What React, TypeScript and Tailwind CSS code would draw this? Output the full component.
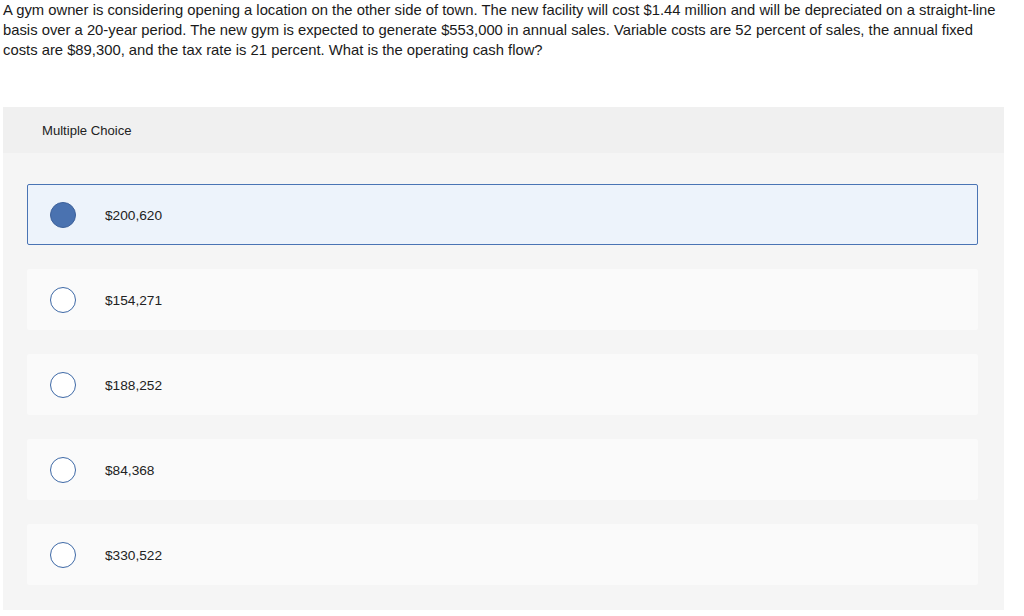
import React from 'react';

const options = ['$200,620', '$154,271', '$188,252', '$84,368', '$330,522'];

export default function App() {
  const selected = 0;
  return (
    <div className="w-[1024px] h-[616px] bg-white font-['Liberation_Sans',sans-serif] text-[#1a1a1a] overflow-hidden">
      {/* question */}
      <p className="px-[3px] text-[14.8px] leading-[20px] whitespace-nowrap">
        A gym owner is considering opening a location on the other side of town. The new facility will cost $1.44 million and will be depreciated on a straight-line
        <br />
        basis over a 20-year period. The new gym is expected to generate $553,000 in annual sales. Variable costs are 52 percent of sales, the annual fixed
        <br />
        costs are $89,300, and the tax rate is 21 percent. What is the operating cash flow?
      </p>

      {/* answer panel */}
      <div className="ml-[3px] mt-[47px] w-[1001px] bg-[#f5f5f5]">
        <div className="h-[46px] bg-[#f0f0f0] flex items-center pl-[39px] pt-[2px] text-[13.1px] text-[#222]">
          Multiple Choice
        </div>
        <div className="flex flex-col gap-[24px] pt-[31px] pb-[25px] pl-[24px] pr-[26px]">
          {options.map((opt, i) => (
            <div
              key={opt}
              className={
                i === selected
                  ? 'h-[61px] flex items-center rounded-[2px] border border-[#4a74b4] bg-[#edf3fb] pl-[22px]'
                  : 'h-[61px] flex items-center rounded-[2px] bg-[#fafafa] pl-[23px]'
              }
            >
              <span
                className={
                  i === selected
                    ? 'w-[26px] h-[26px] rounded-full bg-[#4a72b0] border border-[#3c609a]'
                    : 'w-[26px] h-[26px] rounded-full bg-white border border-[#3e69a6]'
                }
              />
              <span className="ml-[29px] pt-[3px] text-[13.7px] text-[#222]">{opt}</span>
            </div>
          ))}
        </div>
      </div>
    </div>
  );
}
